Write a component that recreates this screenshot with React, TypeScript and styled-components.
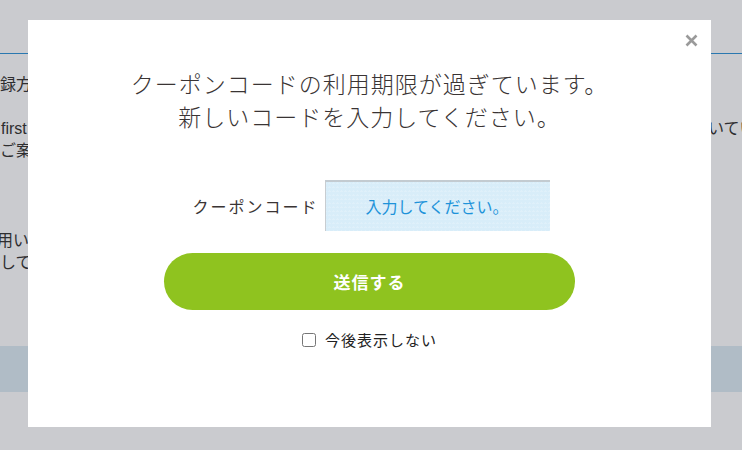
import styled, { createGlobalStyle } from 'styled-components';

const GlobalStyle = createGlobalStyle`
  html, body {
    margin: 0;
    padding: 0;
    background: #cacbcf;
    font-family: 'Noto Sans CJK JP', 'Noto Sans', sans-serif;
    overflow: hidden;
  }
  * {
    box-sizing: border-box;
  }
`;

const App = () => {
  return (
    <>
      <GlobalStyle />
      <Page>
        <Header />
        <Content>
          <LeftColumn>
            <Line $top={20} $indent={0}>録方法について</Line>
            <Line $top={22} $indent={1}>first ご利用</Line>
            <Line $top={0} $indent={0}>ご案内します。</Line>
            <Line $top={68} $indent={-3}>用いてご注文</Line>
            <Line $top={0} $indent={0}>してください</Line>
          </LeftColumn>
          <RightColumn>
            <Line $top={64} $indent={-4}>ついてい</Line>
          </RightColumn>
        </Content>
        <Band />
      </Page>

      <ModalContainer>
        <CloseBtn aria-label="閉じる">
          <svg width="13" height="13" viewBox="0 0 13 13">
            <path
              d="M1.5 1.5 L11.5 11.5 M11.5 1.5 L1.5 11.5"
              stroke="#9a9a9a"
              strokeWidth="2.6"
              strokeLinecap="butt"
            />
          </svg>
        </CloseBtn>
        <Title>
          クーポンコードの利用期限が過ぎています。
          <br />
          新しいコードを入力してください。
        </Title>
        <FormRow>
          <Label>クーポンコード</Label>
          <CodeInput placeholder="入力してください。" />
        </FormRow>
        <SubmitButton>送信する</SubmitButton>
        <CheckRow>
          <CheckBox type="checkbox" />
          <CheckText>今後表示しない</CheckText>
        </CheckRow>
      </ModalContainer>
    </>
  );
};

export default App;

const Page = styled.div`
  width: 742px;
  height: 450px;
  display: flex;
  flex-direction: column;
  color: #2e2e30;
`;

const Header = styled.div`
  height: 54px;
  flex-shrink: 0;
  border-bottom: 1px solid #2a78b0;
`;

const Content = styled.div`
  display: flex;
  justify-content: space-between;
  height: 292px;
  overflow: hidden;
`;

const LeftColumn = styled.div`
  display: flex;
  flex-direction: column;
  width: 120px;
  white-space: nowrap;
`;

const RightColumn = styled.div`
  display: flex;
  flex-direction: column;
  width: 46px;
  white-space: nowrap;
`;

const Line = styled.span<{ $top: number; $indent: number }>`
  margin-top: ${p => p.$top}px;
  margin-left: ${p => p.$indent}px;
  font-family: 'Liberation Sans', 'Noto Sans CJK JP', sans-serif;
  font-size: 16px;
  line-height: 22px;
`;

const Band = styled.div`
  height: 46px;
  background: #b0bcc6;
`;

const ModalContainer = styled.div`
  position: fixed;
  top: 20px;
  left: 28px;
  width: 683px;
  height: 407px;
  display: flex;
  flex-direction: column;
  align-items: center;
  padding-top: 47px;
  background: #ffffff;
`;

const CloseBtn = styled.button`
  position: absolute;
  top: 14px;
  right: 13px;
  display: flex;
  padding: 0;
  border: none;
  background: none;
  cursor: pointer;
`;

const Title = styled.h2`
  margin: 0;
  text-align: center;
  font-size: 23px;
  font-weight: 300;
  line-height: 33px;
  letter-spacing: 1px;
  color: #3a3434;
`;

const FormRow = styled.div`
  display: flex;
  align-items: center;
  gap: 6px;
  margin-top: 47px;
  padding-left: 3px;
`;

const Label = styled.label`
  font-size: 16px;
  font-weight: 400;
  letter-spacing: 2px;
  color: #3a3434;
`;

const CodeInput = styled.input`
  width: 225px;
  height: 51px;
  padding: 0;
  border: none;
  box-shadow: inset 0 2px 0 #c3cbd1, inset 1px 0 0 #c8cdd1;
  background-color: #d8edf9;
  background-image: linear-gradient(45deg, #dff0fa 25%, transparent 25%),
    linear-gradient(-45deg, #dff0fa 25%, transparent 25%);
  background-size: 4px 4px;
  text-align: center;
  font-family: inherit;
  font-size: 16px;
  outline: none;

  &::placeholder {
    color: #1e93d9;
  }
`;

const SubmitButton = styled.button`
  width: 411px;
  height: 57px;
  margin-top: 22px;
  border: none;
  border-radius: 29px;
  background: #8fc31f;
  color: #ffffff;
  font-family: inherit;
  font-size: 17px;
  font-weight: 700;
  letter-spacing: 1px;
  cursor: pointer;
`;

const CheckRow = styled.label`
  display: flex;
  align-items: center;
  gap: 9px;
  margin-top: 19px;
  font-size: 15px;
  color: #222222;
  cursor: pointer;
`;

const CheckBox = styled.input`
  width: 14px;
  height: 14px;
  margin: 0;
`;

const CheckText = styled.span`
  letter-spacing: 1px;
`;
